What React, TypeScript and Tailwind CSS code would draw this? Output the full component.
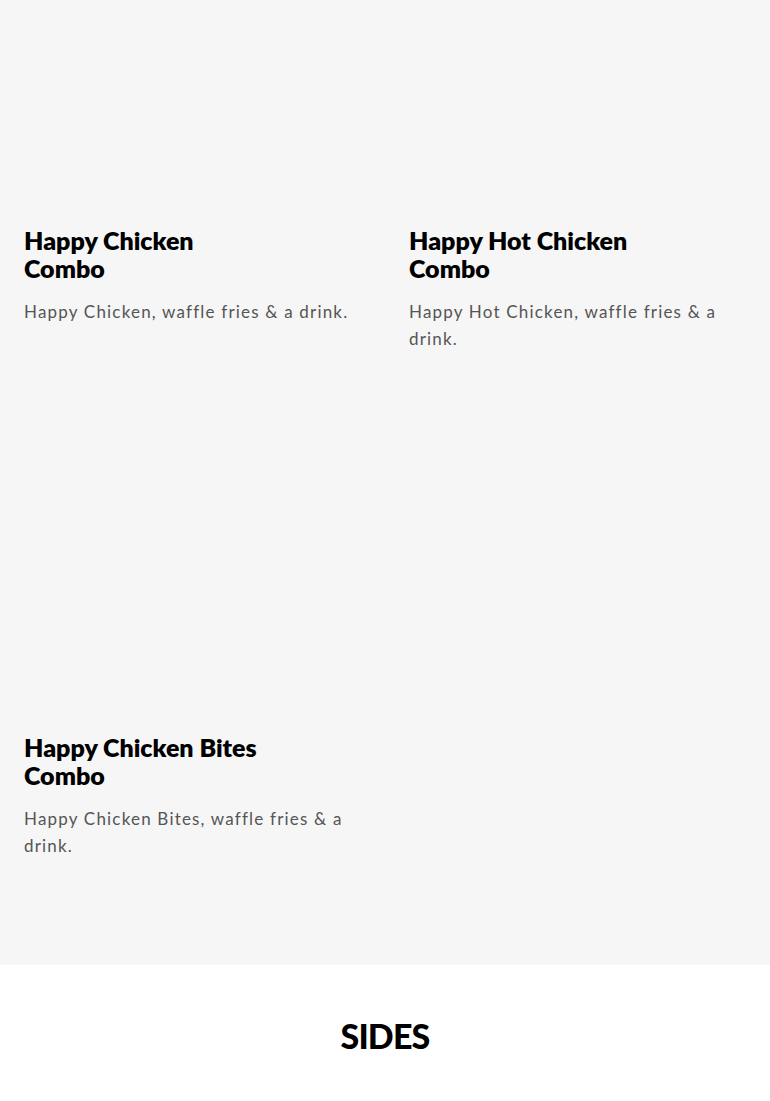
import React from 'react';

const combos = [
  { name: 'Happy Chicken Combo', desc: 'Happy Chicken, waffle fries & a drink.' },
  { name: 'Happy Hot Chicken Combo', desc: 'Happy Hot Chicken, waffle fries & a drink.' },
  { name: 'Happy Chicken Bites Combo', desc: 'Happy Chicken Bites, waffle fries & a drink.' },
];

const font = { fontFamily: '"Lato", "Open Sans", sans-serif' };

export default function App() {
  return (
    <div className="min-h-screen bg-white" style={font}>
      {/* Combos */}
      <section className="bg-[#f6f6f6] px-6 pb-[106px]">
        <div className="grid grid-cols-2 gap-x-12 gap-y-[155px]">
          {combos.map((c) => (
            <div key={c.name}>
              <div className="h-[226px]" />
              <h3 className="max-w-[245px] text-[25px] font-extrabold leading-[28px] text-black">
                {c.name}
              </h3>
              <p className="mt-4 text-[17px] leading-[27px] tracking-[0.07em] text-[#555555]">
                {c.desc}
              </p>
            </div>
          ))}
        </div>
      </section>

      {/* Sides */}
      <section className="bg-white pt-[51px] pb-10">
        <h2 className="text-center text-[34px] font-black leading-[40px] tracking-tight text-black">
          SIDES
        </h2>
      </section>
    </div>
  );
}
